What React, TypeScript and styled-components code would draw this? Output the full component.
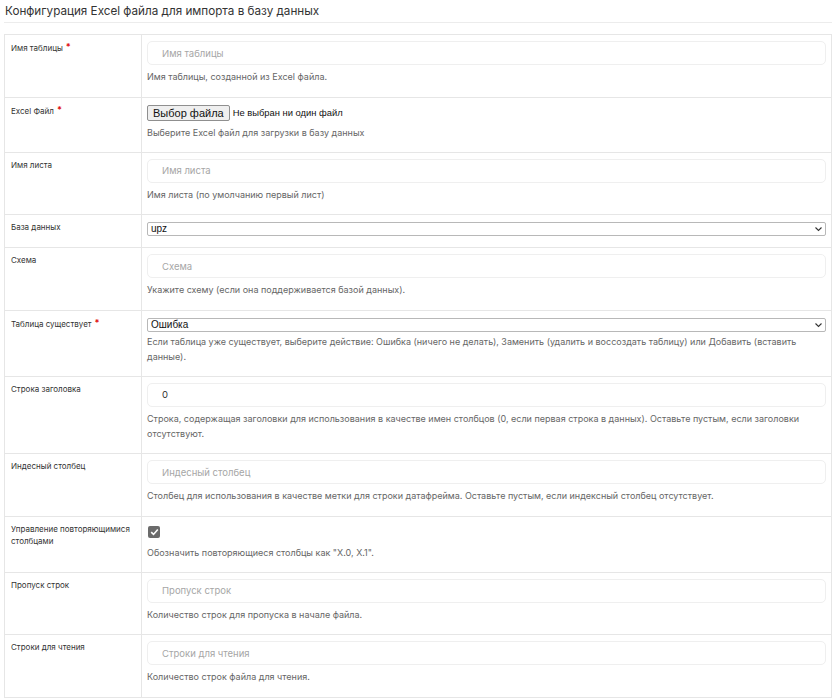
import React from "react";
import styled, { createGlobalStyle } from "styled-components";

const Global = createGlobalStyle`
  html, body { margin: 0; padding: 0; background: #fff; }
  body { font-family: Inter, "Open Sans", sans-serif; color: #333; }
  * { box-sizing: border-box; }
`;

const Page = styled.div`
  padding: 0 2px 0 4px;
`;

const Header = styled.h1`
  margin: 0 0 11px 0;
  padding: 4px 0 3px 1px;
  font-size: 11.7px;
  line-height: 15px;
  font-weight: 400;
  color: #333;
  border-bottom: 1px solid #ececec;
`;

const Table = styled.div`
  border: 1px solid #e6e6e6;
  border-bottom: none;
`;

const Row = styled.div`
  display: grid;
  grid-template-columns: 137px 1fr;
  border-bottom: 1px solid #e6e6e6;
`;

const LabelCell = styled.div`
  border-right: 1px solid #e6e6e6;
  padding: 6px 6px 8px 6px;
  font-size: 8px;
  line-height: 12px;
  color: #333;
`;

const Req = styled.span`
  color: #e01010;
  font-size: 9px;
  font-weight: 700;
  vertical-align: 1px;
  margin-left: 3px;
`;

const FieldCell = styled.div<{ $pb?: number }>`
  padding: 6px 5px ${(p) => p.$pb ?? 12.5}px 5px;
  display: flex;
  flex-direction: column;
`;

const TextInput = styled.input`
  height: 24px;
  width: 100%;
  border: 1px solid #efefef;
  border-radius: 5px;
  padding: 0 14px;
  font-family: Inter, sans-serif;
  font-size: 9.5px;
  color: #333;
  outline: none;
  background: #fff;
  &::placeholder { color: #a6a6a6; }
`;

const Help = styled.div<{ $mt?: number }>`
  margin-top: ${(p) => p.$mt ?? 4}px;
  font-size: 9px;
  line-height: 15px;
  color: #666;
`;

const FileRow = styled.div`
  display: flex;
  align-items: center;
  gap: 3px;
  margin-top: 1px;
  font-family: "Liberation Sans", Arial, sans-serif;
`;

const FileButton = styled.button`
  height: 16px;
  padding: 0 5px;
  font-family: "Liberation Sans", Arial, sans-serif;
  font-size: 11px;
  line-height: 14px;
  color: #111;
  background: #efefef;
  border: 1px solid #8f8f8f;
  border-radius: 2px;
`;

const FileNote = styled.span`
  font-size: 9.4px;
  color: #111;
`;

const SelectWrap = styled.div`
  position: relative;
  height: 14px;
  margin-top: 1px;
`;

const Select = styled.select`
  appearance: none;
  display: block;
  width: 100%;
  height: 14px;
  border: 1px solid #b8b8b8;
  border-radius: 2px;
  padding: 0 0 0 3px;
  font-family: "Liberation Sans", Arial, sans-serif;
  font-size: 10px;
  line-height: 12px;
  color: #111;
  background: #fff;
  outline: none;
`;

const Chevron = styled.svg`
  position: absolute;
  right: 3px;
  top: 3px;
  width: 9px;
  height: 8px;
  pointer-events: none;
`;

const CheckBox = styled.div`
  width: 12px;
  height: 12px;
  margin: 3px 0 0 1px;
  background: #6b6b6b;
  border-radius: 2px;
  display: flex;
  align-items: center;
  justify-content: center;
`;

type Field =
  | { kind: "input"; label: string; req?: boolean; placeholder?: string; value?: string; help: string }
  | { kind: "file"; label: string; req?: boolean; help: string }
  | { kind: "select"; label: string; req?: boolean; value: string; help?: string }
  | { kind: "check"; label: string; help: string };

const fields: Field[] = [
  { kind: "input", label: "Имя таблицы", req: true, placeholder: "Имя таблицы", help: "Имя таблицы, созданной из Excel файла." },
  { kind: "file", label: "Excel Файл", req: true, help: "Выберите Excel файл для загрузки в базу данных" },
  { kind: "input", label: "Имя листа", placeholder: "Имя листа", help: "Имя листа (по умолчанию первый лист)" },
  { kind: "select", label: "База данных", value: "upz" },
  { kind: "input", label: "Схема", placeholder: "Схема", help: "Укажите схему (если она поддерживается базой данных)." },
  {
    kind: "select",
    label: "Таблица существует",
    req: true,
    value: "Ошибка",
    help: "Если таблица уже существует, выберите действие: Ошибка (ничего не делать), Заменить (удалить и воссоздать таблицу) или Добавить (вставить данные).",
  },
  {
    kind: "input",
    label: "Строка заголовка",
    value: "0",
    help: "Строка, содержащая заголовки для использования в качестве имен столбцов (0, если первая строка в данных). Оставьте пустым, если заголовки отсутствуют.",
  },
  {
    kind: "input",
    label: "Индесный столбец",
    placeholder: "Индесный столбец",
    help: "Столбец для использования в качестве метки для строки датафрейма. Оставьте пустым, если индексный столбец отсутствует.",
  },
  { kind: "check", label: "Управление повторяющимися столбцами", help: 'Обозначить повторяющиеся столбцы как "X.0, X.1".' },
  { kind: "input", label: "Пропуск строк", placeholder: "Пропуск строк", help: "Количество строк для пропуска в начале файла." },
  { kind: "input", label: "Строки для чтения", placeholder: "Строки для чтения", help: "Количество строк файла для чтения." },
];

function renderField(f: Field) {
  switch (f.kind) {
    case "input":
      return (
        <FieldCell>
          <TextInput placeholder={f.placeholder} defaultValue={f.value} />
          <Help>{f.help}</Help>
        </FieldCell>
      );
    case "file":
      return (
        <FieldCell $pb={12}>
          <FileRow>
            <FileButton type="button">Выбор файла</FileButton>
            <FileNote>Не выбран ни один файл</FileNote>
          </FileRow>
          <Help>{f.help}</Help>
        </FieldCell>
      );
    case "select":
      return (
        <FieldCell $pb={f.help ? 12 : 11}>
          <SelectWrap>
            <Select defaultValue={f.value}>
              <option value={f.value}>{f.value}</option>
            </Select>
            <Chevron viewBox="0 0 9 8">
              <path d="M1.5 2.5 L4.5 5.5 L7.5 2.5" fill="none" stroke="#333" strokeWidth="1.1" />
            </Chevron>
          </SelectWrap>
          {f.help && <Help $mt={2}>{f.help}</Help>}
        </FieldCell>
      );
    case "check":
      return (
        <FieldCell $pb={12}>
          <CheckBox>
            <svg width="9" height="8" viewBox="0 0 9 8">
              <path d="M1.2 4.2 L3.5 6.4 L7.8 1.4" fill="none" stroke="#fff" strokeWidth="1.6" />
            </svg>
          </CheckBox>
          <Help $mt={7}>{f.help}</Help>
        </FieldCell>
      );
  }
}

export default function App() {
  return (
    <Page>
      <Global />
      <Header>Конфигурация Excel файла для импорта в базу данных</Header>
      <Table>
        {fields.map((f, i) => (
          <Row key={i}>
            <LabelCell>
              {f.label}
              {"req" in f && f.req && <Req>*</Req>}
            </LabelCell>
            {renderField(f)}
          </Row>
        ))}
      </Table>
    </Page>
  );
}
